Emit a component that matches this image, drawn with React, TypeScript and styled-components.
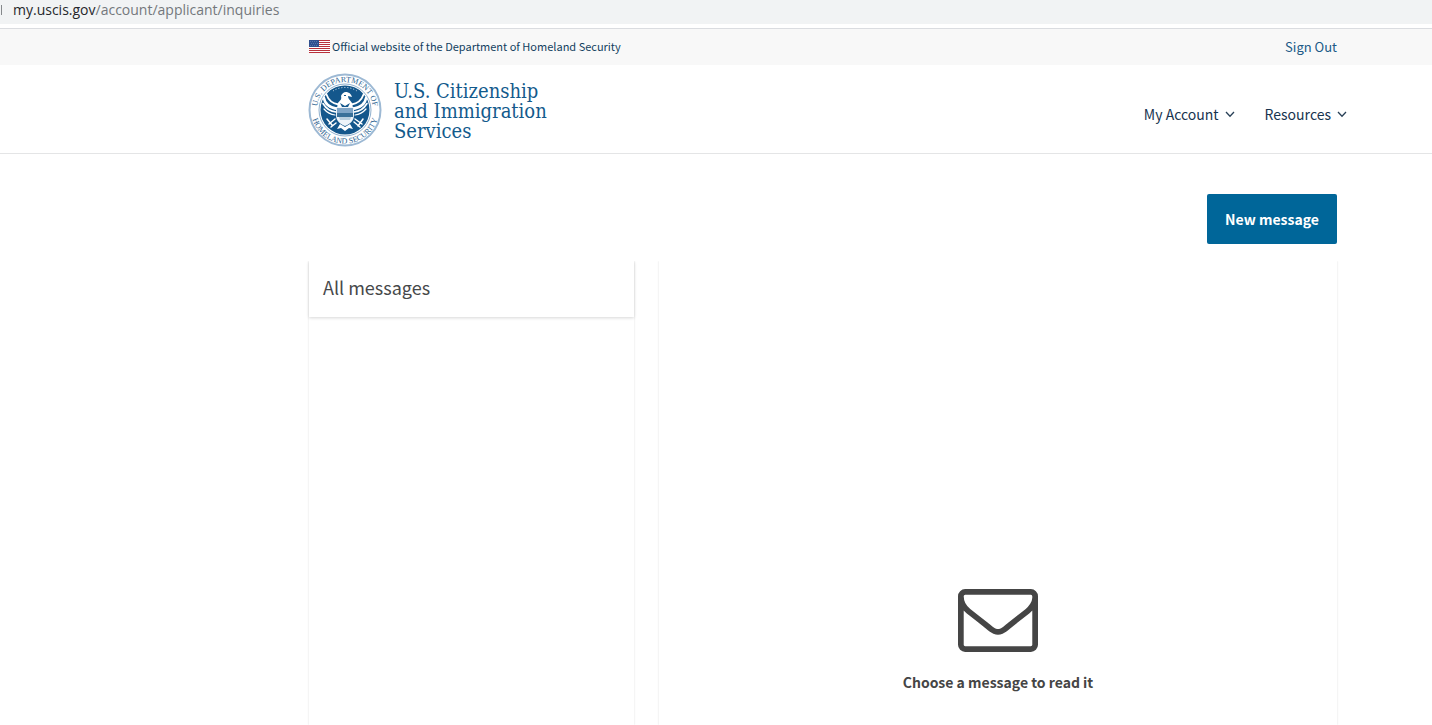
import React from 'react';
import styled, { createGlobalStyle } from 'styled-components';

const GlobalStyle = createGlobalStyle`
  *, *::before, *::after { box-sizing: border-box; }
  html, body { margin: 0; background: #fff; }
  body {
    font-family: "Noto Sans CJK SC", "Open Sans", sans-serif;
    color: #46484a;
    overflow: hidden;
  }
`;

const Page = styled.div`
  display: flex;
  flex-direction: column;
  min-height: 100vh;
`;

const AddressBar = styled.div`
  display: flex;
  align-items: flex-start;
  gap: 11px;
  height: 24px;
  background: #f1f3f4;
  font-family: "Open Sans", sans-serif;
  font-size: 14px;
  line-height: 20px;
  color: #74787c;
`;

const AddressMark = styled.span`
  width: 2px;
  height: 10px;
  margin-top: 5px;
  border-right: 1px solid #85888b;
`;

const Domain = styled.span`
  color: #26282b;
`;

const Banner = styled.div`
  display: flex;
  align-items: center;
  justify-content: space-between;
  height: 37px;
  margin-top: 4px;
  padding: 0 95px 1px 309px;
  border-top: 1px solid #dadce0;
  background: #f8f8f8;
`;

const Official = styled.div`
  display: flex;
  align-items: center;
  gap: 2px;
  font-size: 11px;
  line-height: 17px;
  color: #123f5f;
`;

const SignOut = styled.a`
  font-size: 13px;
  line-height: 17px;
  color: #205a87;
  text-decoration: none;
`;

const Header = styled.header`
  display: flex;
  align-items: center;
  justify-content: space-between;
  height: 89px;
  padding: 0 85px 0 308px;
  border-bottom: 1px solid #e4e5e6;
`;

const Brand = styled.a`
  display: flex;
  align-items: center;
  gap: 12px;
  margin-top: 2px;
  color: #125a8c;
  text-decoration: none;
`;

const BrandName = styled.span`
  padding-top: 2px;
  font-family: "DejaVu Serif Condensed", "DejaVu Serif", serif;
  font-size: 20px;
  line-height: 20px;
`;

const Nav = styled.nav`
  display: flex;
  gap: 30px;
  margin-top: 10px;
`;

const NavButton = styled.button`
  display: flex;
  align-items: center;
  gap: 6px;
  padding: 0;
  border: 0;
  background: none;
  font-family: inherit;
  font-size: 14px;
  line-height: 24px;
  color: #18344f;
`;

const Main = styled.main`
  display: flex;
  flex: 1;
  flex-direction: column;
  padding: 40px 95px 0 309px;
`;

const NewMessage = styled.button`
  align-self: flex-end;
  width: 130px;
  height: 50px;
  padding: 0;
  border: 0;
  border-radius: 2px;
  background: #006699;
  font-family: inherit;
  font-size: 14px;
  font-weight: 700;
  line-height: 24px;
  color: #fff;
`;

const Panels = styled.div`
  display: grid;
  grid-template-columns: 325fr 678fr;
  gap: 25px;
  flex: 1;
  margin-top: 17px;
`;

const Panel = styled.section`
  display: flex;
  flex-direction: column;
  box-shadow: 0 0 2px rgba(0, 0, 0, 0.13);
  clip-path: inset(0 -4px 0 -4px);
`;

const PanelHeading = styled.h1`
  margin: 0;
  padding: 12px 14px 16px;
  font-size: 18px;
  font-weight: 400;
  line-height: 28px;
  box-shadow: 0 1px 3px rgba(0, 0, 0, 0.16);
`;

const EmptyState = styled.div`
  display: flex;
  flex-direction: column;
  align-items: center;
  gap: 18px;
  padding-top: 328px;
  font-size: 14px;
  font-weight: 700;
  line-height: 24px;
  color: #454545;
`;

const EmptyText = styled.p`
  margin: 0;
`;

function Flag() {
  return (
    <svg width="21" height="13" viewBox="0 0 21 13" aria-hidden="true">
      <path fill="#fff" d="M0 0h21v13H0z" />
      <path
        stroke="#b8323c"
        d="M0 .5h21M0 2.5h21M0 4.5h21M0 6.5h21M0 8.5h21M0 10.5h21M0 12.5h21"
      />
      <path fill="#31508f" d="M0 0h10v7H0z" />
      <path stroke="#5573ab" strokeDasharray="1 1" d="M1 1.5h8M2 3.5h7M1 5.5h8" />
    </svg>
  );
}

function Chevron() {
  return (
    <svg width="10" height="7" viewBox="0 0 10 7" aria-hidden="true">
      <path d="M1 1l4 4.2L9 1" fill="none" stroke="#294057" strokeWidth="1.3" />
    </svg>
  );
}

function Seal() {
  return (
    <svg width="74" height="74" viewBox="0 0 74 74" aria-hidden="true">
      <defs>
        <path id="seal-top" d="M10.200 46A28.200 28.200 0 1 1 63.800 46" />
        <path id="seal-bottom" d="M3.400 37A33.600 33.600 0 0 0 70.600 37" />
      </defs>
      <circle cx="37" cy="37" r="35.5" fill="#fff" stroke="#9db9d4" strokeWidth="2" />
      <circle cx="37" cy="37" r="26" fill="#fff" stroke="#8fb0ce" strokeWidth="1" />
      <circle cx="37" cy="37" r="24.5" fill="#14578c" />
      <g fill="#2d6391" fontFamily="Liberation Serif, serif" fontSize="8">
        <text textAnchor="middle">
          <textPath href="#seal-top" startOffset="50%">U.S. DEPARTMENT OF</textPath>
        </text>
        <text textAnchor="middle">
          <textPath href="#seal-bottom" startOffset="50%">HOMELAND SECURITY</textPath>
        </text>
      </g>
      {/* eagle wings */}
      <g fill="none" stroke="#fff" strokeLinecap="round">
        <path strokeWidth="2.400" d="M16 25c1 7 7 10 14 11M58 25c-1 7-7 10-14 11" />
        <path strokeWidth="1.800" d="M18.500 21.500c2 6 6 9 12 10M55.500 21.500c-2 6-6 9-12 10" />
        <path strokeWidth="1.600" d="M15 30.500c3 5 7 8 13 8.500M59 30.500c-3 5-7 8-13 8.500" />
        <path strokeWidth="1.200" d="M16 36c3 3.500 6 5.500 11 6M58 36c-3 3.500-6 5.500-11 6" />
      </g>
      <path
        fill="#fff"
        d="M33 23c1-3 4-5 7-3.500 2 .5 3 2 4 4.500l-4-1c0 3 2 4 4 7l1 5H29l1-5c2-3 4-3 3-7z"
      />
      <path fill="#14578c" d="M36 22h2v1h-2zM32 30l5 3 5-3-2 4h-6z" />
      {/* shield */}
      <path fill="#eef4f9" d="M28 34h18v8c0 6-4 9-9 11-5-2-9-5-9-11z" />
      <path fill="#7fa5c7" d="M29 35h16v5H29z" />
      <path fill="#397099" d="M29 40h16v4H29z" />
      <path fill="#b8cede" d="M31 44h12l-1 3H32z" />
      {/* tail, branch and arrows */}
      <path fill="#fff" d="M32 51l5 3 5-3 3 5-4-1-4 3-4-3-4 1z" />
      <path
        fill="none"
        stroke="#fff"
        strokeWidth="1.500"
        strokeLinecap="round"
        d="M27 46l-6 5M28 50l-5 4M19 46l5 6M47 46l7 5M46 49l6 5M55 46l-5 7"
      />
      <path fill="none" stroke="#e8f0f7" strokeDasharray="1 2" d="M25 18a22 22 0 0 1 24 0" />
    </svg>
  );
}

function Envelope() {
  return (
    <svg width="80" height="63" viewBox="0 256 1792 1408" aria-hidden="true">
      <path
        fill="#454545"
        d="M1664 1504v-768q-32 36-69 66-268 206-426 338-51 43-83 67t-86.5 48.5-102.5 24.5h-2q-48 0-102.5-24.5t-86.5-48.5-83-67q-158-132-426-338-37-30-69-66v768q0 13 9.5 22.5t22.5 9.500h1472q13 0 22.500-9.500t9.500-22.500zm0-1051v-24.500l-.5-13-3-12.500-5.500-9-9-7.500-14-2.500h-1472q-13 0-22.500 9.500t-9.500 22.500q0 168 147 284 193 152 401 317 6 5 35 29.500t46 37.500 44.500 31.500 50.500 27.500 43 9h2q20 0 43-9t50.500-27.500 44.500-31.500 46-37.500 35-29.500q208-165 401-317 54-43 100.500-115.500t46.500-131.500zm128-37v1088q0 66-47 113t-113 47h-1472q-66 0-113-47t-47-113v-1088q0-66 47-113t113-47h1472q66 0 113 47t47 113z"
      />
    </svg>
  );
}

export default function App() {
  return (
    <>
      <GlobalStyle />
      <Page>
        <AddressBar>
          <AddressMark />
          <span>
            <Domain>my.uscis.gov</Domain>/account/applicant/inquiries
          </span>
        </AddressBar>
        <Banner>
          <Official>
            <Flag />
            <span>Official website of the Department of Homeland Security</span>
          </Official>
          <SignOut href="#">Sign Out</SignOut>
        </Banner>
        <Header>
          <Brand href="#">
            <Seal />
            <BrandName>
              U.S. Citizenship
              <br />
              and Immigration
              <br />
              Services
            </BrandName>
          </Brand>
          <Nav>
            <NavButton type="button">
              My Account
              <Chevron />
            </NavButton>
            <NavButton type="button">
              Resources
              <Chevron />
            </NavButton>
          </Nav>
        </Header>
        <Main>
          <NewMessage type="button">New message</NewMessage>
          <Panels>
            <Panel>
              <PanelHeading>All messages</PanelHeading>
            </Panel>
            <Panel>
              <EmptyState>
                <Envelope />
                <EmptyText>Choose a message to read it</EmptyText>
              </EmptyState>
            </Panel>
          </Panels>
        </Main>
      </Page>
    </>
  );
}
